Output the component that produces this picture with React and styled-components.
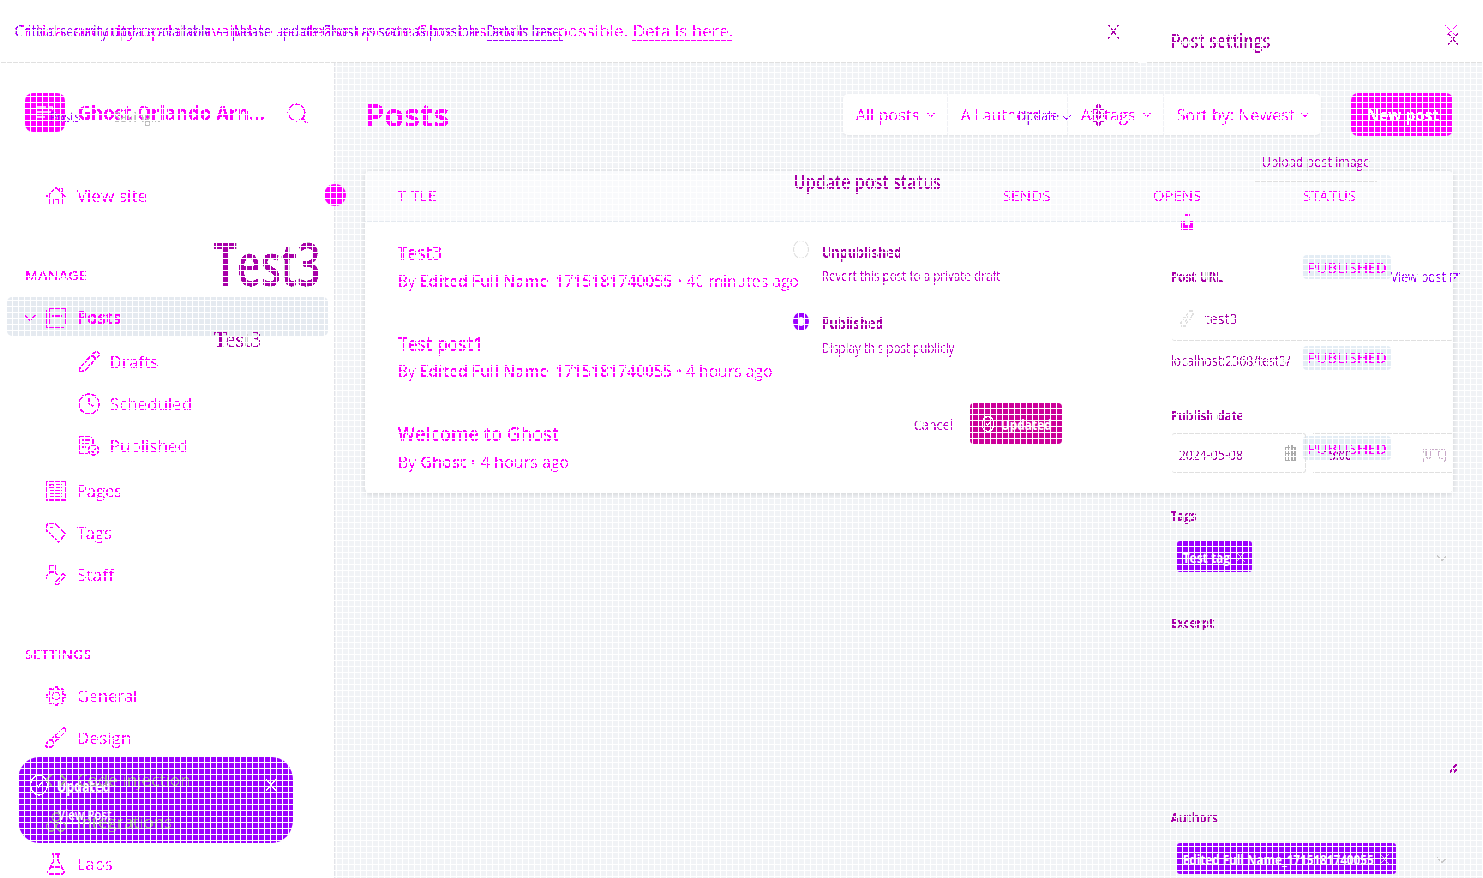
import React, { useLayoutEffect, useRef, useState } from "react";
import styled, { createGlobalStyle, css } from "styled-components";
import {
  Search, Pencil, Clock, Settings, Brush, FlaskConical, Code,
  ChevronDown, ChevronLeft, X, CircleCheck, SquareArrowOutUpRight,
} from "lucide-react";

const C = {
  hot: "#ff00ff", deep: "#a800a8", mid: "#c400cc", violet: "#9c00ff", rose: "#cc0099",
  bg: "#f1f3f6", line: "#e0e0e0", soft: "#e5eaf0", badge: "#e4edf5", gray: "#c8c8c8",
};

const Global = createGlobalStyle`
  * { box-sizing: border-box; }
  html, body { margin: 0; overflow: hidden; }
  body { font-family: "Open Sans", "Noto Sans", sans-serif; background: #fff; }
`;

const Screen = styled.div`
  position: relative;
  width: 1483px;
  height: 878px;
  overflow: hidden;
  background: #fff;
`;

const Defs = styled.svg`
  position: absolute;
  width: 0;
  height: 0;
`;

const GridMesh = styled.div`
  position: absolute;
  inset: 0;
  z-index: 9;
  pointer-events: none;
  background:
    repeating-linear-gradient(to right, #fff 0 1px, transparent 1px 6px),
    repeating-linear-gradient(to bottom, #fff 0 1px, transparent 1px 6px);
`;

const filterOf = (p) => (p.$tone === "plain" ? "none" : p.$tone === "fringe" ? "url(#fringe)" : "url(#crisp)");

const Label = styled.span`
  display: block;
  flex: none;
  width: ${(p) => p.$w}px;
  height: 30px;
  line-height: 30px;
  white-space: nowrap;
  font-size: ${(p) => p.$size}px;
  font-weight: ${(p) => p.$weight};
  color: ${(p) => p.$color};
  filter: ${filterOf};
  ${(p) => p.$serif && css`font-family: "Liberation Serif", serif;`}
  ${(p) => p.$underline && css`text-decoration: underline; text-underline-offset: 3px;`}
  ${(p) => p.$raised && css`position: relative; z-index: 4;`}
`;

const Squeezed = styled.span`
  display: inline-block;
  transform-origin: left center;
  text-decoration: inherit;
  b { font-weight: 600; }
  u { text-decoration-color: currentColor; text-underline-offset: 3px; }
`;

function Text({ w, size = 16, weight = 400, color = C.hot, tone, serif, underline, raised, children }) {
  const ref = useRef(null);
  const [k, setK] = useState(1);
  useLayoutEffect(() => {
    const natural = ref.current.offsetWidth;
    if (natural) setK((w + 1) / natural);
  }, [w]);
  return (
    <Label $w={w} $size={size} $weight={weight} $color={color} $tone={tone} $serif={serif} $underline={underline} $raised={raised}>
      <Squeezed ref={ref} style={{ transform: `translateX(-0.3px) scaleX(${k})` }}>{children}</Squeezed>
    </Label>
  );
}

const Glyph = styled.span`
  display: flex;
  flex: none;
  color: ${(p) => p.$color || C.hot};
  filter: ${filterOf};
  margin: 0 ${(p) => -(p.$bleed || 0)}px;
  ${(p) => p.$raised && css`position: relative; z-index: 4;`}
  svg {
    width: ${(p) => p.$w || 20}px;
    height: ${(p) => p.$h || p.$w || 20}px;
    stroke-width: ${(p) => p.$stroke || 1.4};
  }
`;

/* 20px outline icons of the navigation */
const Outline = ({ d, children }) => (
  <svg viewBox="0 0 20 20" fill="none" stroke="currentColor">
    <path d={d} />
    {children}
  </svg>
);
const HouseIcon = () => <Outline d="M.5 10.500 10 1.500l9.500 9M3.500 9v9.500h4V13h5v5.500h4V9M14 5V2.500h2.500V7" />;
const PostsIcon = () => <Outline d="M3.500.5h16v16h-16zM.5 2.500v17h17M6 4.500h11M6 7.500h10M6 8.500h10" />;
const PagesIcon = () => <Outline d="M.5.5h19v18.500H.5zM4 3.500h4v3H4zM10 3.500h6M10 6.500h6M4 9.500h12M4 12.500h12M4 15.500h12" />;
const TagIcon = () => <Outline d="M.5 7.500v-5l2-2h6l11 10.500-7 8zM4.500 4.500h2.500" />;
const StaffIcon = () => <Outline d="M3.500.5h6v6h-6zM.5 14v-3l3.500-3.500h5l2.500 2.500M9.500 17.500l7.500-9 2.500 2-7.500 9h-2.500z" />;
const PublishedIcon = () => (
  <Outline d="M9 17.500H.5V.5H11l3 3V8M3 4h8M3 7.500h7M3 11h4M12 14l2 2 3-4">
    <circle cx="14.500" cy="14" r="5" />
  </Outline>
);
const IntegrationsIcon = () => (
  <Outline d="">
    <circle cx="10" cy="5" r="4" />
    <circle cx="5" cy="14.500" r="4.500" />
    <circle cx="15" cy="14.500" r="4.500" />
  </Outline>
);
const gearPath = Array.from({ length: 32 }, (_, i) => {
  const r = i % 4 < 2 ? 9.5 : 7.2;
  const a = ((i - 0.5) / 32) * Math.PI * 2;
  return `${i ? "L" : "M"}${(10 + r * Math.cos(a)).toFixed(2)} ${(10 + r * Math.sin(a)).toFixed(2)}`;
}).join("") + "Z";
const GearIcon = () => (
  <Outline d={gearPath}>
    <circle cx="10" cy="10" r="3.700" />
  </Outline>
);
const CalendarIcon = () => (
  <svg viewBox="0 0 12 16" preserveAspectRatio="none" fill="none" stroke="currentColor">
    <path d="M1 2.500h10v13H1zM1 5.500h10M1 8.500h10M1 11.500h10M4.500 0v15M8 0v15" />
  </svg>
);
const LinkIcon = () => (
  <svg viewBox="0 0 14 17" fill="none" stroke="currentColor">
    <path d="M6 6l3-5h3l1 3-3 5H8M8 11l-3 5H2l-1-3 3-5h2M5 12l4-7" />
  </svg>
);
const UnsplashIcon = () => (
  <svg viewBox="0 0 14 18" fill="currentColor">
    <path d="M4 0h6v3H4zM0 8h4v4h6V8h3v9H0z" />
  </svg>
);
const ResizeHandle = () => (
  <svg viewBox="0 0 9 10" fill="none" stroke="currentColor">
    <path d="M1 9 8 1M5 9l3-3" />
  </svg>
);

/* Banner */
const Banner = styled.header`
  display: flex;
  align-items: center;
  justify-content: space-between;
  height: 63px;
  padding: 0 21px 1px 14px;
  border-bottom: 1px solid ${C.line};
`;

const Body = styled.div`
  display: flex;
  height: 815px;
`;

/* Sidebar */
const Sidebar = styled.aside`
  position: relative;
  width: 335px;
  flex: none;
  padding-top: 30px;
  border-right: 1px solid #e3e4e9;
  background: #fff;
`;
const Brand = styled.div`
  display: flex;
  align-items: center;
  height: 40px;
  padding-left: 25px;
`;
const Logo = styled.div`
  display: flex;
  width: 40px;
  height: 39px;
  margin: 0 13px 1px 0;
  padding: 13px 0 0 12px;
  border-radius: 8px;
  background: ${C.hot};
  color: #fff;
`;
const SearchSlot = styled.div`
  margin-left: 21px;
`;
const NavRow = styled.div`
  display: flex;
  align-items: center;
  gap: 11px;
  height: 42px;
  padding-left: ${(p) => (p.$nested ? 79 : 46)}px;
  margin-top: ${(p) => p.$mt || 0}px;
`;
const ActiveRow = styled.div`
  display: flex;
  align-items: center;
  height: 39px;
  margin: 7px 6px 5px 7px;
  padding: 2px 0 0 18px;
  gap: 11px;
  border-radius: 5px;
  background: ${C.soft};
`;
const Caption = styled.div`
  display: flex;
  align-items: center;
  height: 30px;
  margin-top: ${(p) => p.$mt}px;
  padding-left: 25px;
`;
const Collapse = styled.div`
  position: absolute;
  right: -12px;
  top: 121px;
  width: 22px;
  height: 22px;
  border-radius: 50%;
  background: ${C.hot};
`;

/* Main list */
const Main = styled.main`
  flex: 1;
  padding: 30px 30px 0;
  background: ${C.bg};
`;
const Toolbar = styled.div`
  display: flex;
  align-items: center;
  height: 43px;
  margin-bottom: 35px;
`;
const Filters = styled.div`
  display: flex;
  height: 41px;
  margin: 0 30px 0 auto;
  border-radius: 5px;
  background: #fff;
  box-shadow: 0 1px 3px #0001;
`;
const Filter = styled.div`
  display: flex;
  align-items: center;
  width: ${(p) => p.$w}px;
  padding: 0 10px 0 13px;
  justify-content: space-between;
  & + & { border-left: 1px solid #f0f1f5; }
`;
const Primary = styled.div`
  display: flex;
  align-items: center;
  justify-content: center;
  width: 102px;
  height: 43px;
  border-radius: 7px;
  background: ${C.hot};
`;
const Table = styled.section`
  height: 322px;
  border-radius: 5px;
  background: #fff;
  box-shadow: 0 1px 6px #00000024;
`;
const columns = css`
  display: grid;
  grid-template-columns: 605px 150px 150px 1fr;
  padding-left: 33px;
`;
const HeadRow = styled.div`
  ${columns}
  align-items: center;
  height: 51px;
  padding-bottom: 2px;
  border-bottom: 1px solid ${C.soft};
  border-radius: 5px 5px 0 0;
  background: #f9fafc;
`;
const PostRow = styled.div`
  ${columns}
  height: 90.5px;
  padding-top: 16px;
`;
const PostInfo = styled.div`
  grid-column: 1 / 4;
  display: flex;
  flex-direction: column;
`;
const Meta = styled.div`
  margin-top: -2.5px;
`;
const Badge = styled.div`
  display: flex;
  align-items: center;
  width: 88px;
  height: 24px;
  margin-top: 17px;
  padding: 0 0 1px 5px;
  border-radius: 4px;
  background: ${C.badge};
`;

/* Editor layer that floats above the list */
const Layer = styled.div`
  position: absolute;
  inset: 0;
  z-index: 3;
`;
const At = styled.div`
  position: absolute;
  left: ${(p) => p.$x}px;
  top: ${(p) => p.$y - 15}px;
  height: 30px;
  display: flex;
  align-items: center;
`;
const Box = styled.div`
  position: absolute;
  left: ${(p) => p.$x}px;
  top: ${(p) => p.$y}px;
  width: ${(p) => p.$w}px;
  height: ${(p) => p.$h}px;
  display: flex;
  align-items: center;
  gap: 6px;
  padding-left: ${(p) => p.$pad || 0}px;
  border-radius: ${(p) => p.$r || 0};
  background: ${(p) => p.$bg || "transparent"};
`;
const Field = styled(Box)`
  border: solid ${C.line};
  border-width: ${(p) => p.$edges};
`;
const Radio = styled.span`
  width: 16px;
  height: 19px;
  border-radius: 50%;
  border: ${(p) => (p.$on ? `5px solid ${C.violet}` : "1px solid #dcdcdc")};
`;
const Toast = styled(Box)`
  z-index: 2;
  border-radius: 21px / 23px;
`;

const posts = [
  { title: "Test3", w: 43, by: "Edited Full Name_1715181740055", when: "40 minutes ago", mw: 400 },
  { title: "Test post1", w: 84, by: "Edited Full Name_1715181740055", when: "4 hours ago", mw: 374 },
  { title: "Welcome to Ghost", w: 161, by: "Ghost", when: "4 hours ago", mw: 171 },
];

const Nav = ({ icon, label, w, nested, mt, wide, buried }) => (
  <NavRow $nested={nested} $mt={mt}>
    <Glyph $w={wide ? 24 : 20} $bleed={wide ? 2 : 0} $color={buried ? "#999" : C.hot} $raised={buried}>{icon}</Glyph>
    <Text w={w} size={17} color={buried ? "#999" : C.hot} raised={buried}>{label}</Text>
  </NavRow>
);

const Item = ({ x, y, size = 15, ...rest }) => (
  <At $x={x} $y={size === 15 ? y - 1 : y}><Text color={C.deep} tone="fringe" size={size} {...rest} /></At>
);
const Mark = ({ x, y, w, h, color, stroke, children }) => (
  <At $x={x} $y={y}><Glyph $w={w} $h={h} $color={color || C.deep} $stroke={stroke}>{children}</Glyph></At>
);

const Notice = () => (
  <>Critical security update available — please update Ghost as soon as possible. <u>Details here.</u></>
);

export default function App() {
  return (
    <Screen>
      <Global />
      <Defs>
        <filter id="crisp" colorInterpolationFilters="sRGB">
          <feComponentTransfer><feFuncA type="discrete" tableValues="0 0 0 0 1 1 1 1 1" /></feComponentTransfer>
        </filter>
        <filter id="fringe" colorInterpolationFilters="sRGB">
          <feComponentTransfer in="SourceAlpha" result="wide"><feFuncA type="discrete" tableValues="0 0 1 1 1 1 1" /></feComponentTransfer>
          <feFlood floodColor="#d0d0d0" />
          <feComposite in2="wide" operator="in" result="halo" />
          <feComponentTransfer in="SourceGraphic" result="core"><feFuncA type="discrete" tableValues="0 1" /></feComponentTransfer>
          <feMerge><feMergeNode in="halo" /><feMergeNode in="core" /></feMerge>
        </filter>
      </Defs>

      <Banner>
        <Text w={718} size={16}><Notice /></Text>
        <Glyph $w={22}><X /></Glyph>
      </Banner>

      <Body>
        <Sidebar>
          <Brand>
            <Logo>
              <svg width="16" height="12" viewBox="0 0 16 12" fill="none" stroke="currentColor" strokeWidth="1.5">
                <path d="M0 1h9M12 1h4v3M0 6h14M0 11h8" />
              </svg>
            </Logo>
            <Text w={186} size={19} weight={700}>Ghost Orlando Arn...</Text>
            <SearchSlot><Glyph $w={25}><Search /></Glyph></SearchSlot>
          </Brand>
          <Nav icon={<HouseIcon />} label="View site" w={70} mt={42} />
          <Caption $mt={43}><Text w={61} size={13} weight={600}>MANAGE</Text></Caption>
          <ActiveRow>
            <Glyph $w={20} $bleed={5} $stroke={1.8}><ChevronDown /></Glyph>
            <Glyph><PostsIcon /></Glyph>
            <Text w={43} size={17} weight={700}>Posts</Text>
          </ActiveRow>
          <Nav nested wide icon={<Pencil />} label="Drafts" w={48} />
          <Nav nested wide icon={<Clock />} label="Scheduled" w={82} />
          <Nav nested icon={<PublishedIcon />} label="Published" w={77} />
          <Nav icon={<PagesIcon />} label="Pages" w={45} mt={3} />
          <Nav icon={<TagIcon />} label="Tags" w={34} />
          <Nav icon={<StaffIcon />} label="Staff" w={36} />
          <Caption $mt={43}><Text w={66} size={13} weight={600}>SETTINGS</Text></Caption>
          <Nav icon={<GearIcon />} label="General" w={60} mt={6} />
          <Nav wide icon={<Brush />} label="Design" w={54} />
          <Nav wide icon={<Code />} label="Code injection" w={113} buried />
          <Nav icon={<IntegrationsIcon />} label="Integrations" w={95} buried />
          <Nav wide icon={<FlaskConical />} label="Labs" w={35} />
          <Collapse />
        </Sidebar>

        <Main>
          <Toolbar>
            <Text w={84} size={32} weight={700}>Posts</Text>
            <Filters>
              {[["All posts", 63, 104], ["All authors", 78, 120], ["All tags", 54, 96], ["Sort by: Newest", 117, 158]].map(([t, w, box]) => (
                <Filter key={t} $w={box}>
                  <Text w={w}>{t}</Text>
                  <Glyph $w={12} $stroke={2.6}><ChevronDown /></Glyph>
                </Filter>
              ))}
            </Filters>
            <Primary><Text w={71} size={16} weight={700} color="#fff">New post</Text></Primary>
          </Toolbar>
          <Table>
            <HeadRow>
              <Text w={38} size={15}>TITLE</Text>
              <Text w={47} size={15}>SENDS</Text>
              <Text w={48} size={15}>OPENS</Text>
              <Text w={52} size={15}>STATUS</Text>
            </HeadRow>
            {posts.map((p) => (
              <PostRow key={p.title}>
                <PostInfo>
                  <Text w={p.w} size={19} weight={600}>{p.title}</Text>
                  <Meta><Text w={p.mw} size={16}>By <b>{p.by}</b> • {p.when}</Text></Meta>
                </PostInfo>
                <Badge><Text w={78} size={15} weight={500}>PUBLISHED</Text></Badge>
              </PostRow>
            ))}
          </Table>
        </Main>
      </Body>

      <Layer>
        <Item x={15} y={31} w={547} size={16} color={C.violet}><Notice /></Item>
        <Box $x={1138} $y={62} $w={9} $h={1} $bg="#fff" />
        <Mark x={1103} y={31} w={21} h={27}><X preserveAspectRatio="none" /></Mark>
        <Mark x={1443} y={39} w={20} h={24}><X preserveAspectRatio="none" /></Mark>
        <Mark x={33} y={116} w={12} h={16} color={C.gray}><ChevronLeft /></Mark>
        <Item x={50} y={117} w={30} color={C.violet}>Posts</Item>
        <Item x={114} y={117} w={46} color="#bbb">Saving...</Item>

        <At $x={214} $y={263}><Text w={106} size={60} weight={600} color={C.deep} tone="fringe">Test3</Text></At>
        <Item x={214} y={340} w={47} size={23} serif>Test3</Item>

        <Item x={1018} y={116} w={40} color={C.violet}>Update</Item>
        <Mark x={1059} y={117} w={15} h={15} color={C.violet} stroke={2}><ChevronDown /></Mark>
        <Mark x={1090} y={115} w={17} h={24} color={C.mid} stroke={2}><Settings preserveAspectRatio="none" /></Mark>

        <Item x={794} y={182} w={146} size={20} weight={600}>Update post status</Item>
        <At $x={792.5} $y={249}><Radio /></At>
        <Item x={822} y={252} w={79} size={16} weight={700}>Unpublished</Item>
        <Item x={822} y={276} w={178} size={14} color={C.mid}>Revert this post to a private draft</Item>
        <At $x={792.5} $y={321}><Radio $on /></At>
        <Item x={822} y={323} w={61} size={16} weight={700}>Published</Item>
        <Item x={822} y={348} w={132} size={14} color={C.mid}>Display this post publicly</Item>
        <Item x={914} y={425} w={38} color={C.mid}>Cancel</Item>
        <Box $x={970} $y={403} $w={92} $h={41} $r="4px" $bg={C.rose} $pad={11}>
          <Glyph $w={14} $h={18} $color="#fff" $stroke={1.8}><CircleCheck preserveAspectRatio="none" /></Glyph>
          <Text w={50} size={15} weight={700} color="#fff" tone="plain">Updated</Text>
        </Box>

        <Item x={1171} y={41} w={99} size={20} weight={600}>Post settings</Item>
        <Item x={1262} y={162} w={108} color={C.mid}>Upload post image</Item>
        <Box $x={1255} $y={181} $w={122} $h={1} $bg={C.line} />
        <Mark x={1181} y={222} w={13} h={18} color={C.hot}><UnsplashIcon /></Mark>

        <Item x={1171} y={277} w={51} weight={700}>Post URL</Item>
        <Item x={1391} y={277} w={54} color={C.violet}>View post</Item>
        <Mark x={1449} y={278} w={11} h={12} color={C.violet} stroke={3.4}><SquareArrowOutUpRight preserveAspectRatio="none" /></Mark>
        <Field $x={1172} $y={295} $w={281} $h={46} $r="3px" $edges="0 0 1px 0" />
        <Mark x={1180} y={318} w={14} h={17} color={C.line}><LinkIcon /></Mark>
        <Item x={1205} y={319} w={32}>test3</Item>
        <Item x={1171} y={361} w={119}>localhost:2368/test3/</Item>
        <Item x={1171} y={416} w={72} weight={700}>Publish date</Item>
        <Field $x={1172} $y={433} $w={134} $h={40} $r="3px" $edges="1px 1px 1px 0" />
        <Field $x={1313} $y={433} $w={140} $h={40} $edges="1px 0" />
        <Item x={1179} y={455} w={63}>2024-05-08</Item>
        <Mark x={1284} y={453} w={12} h={16} color="#aaa"><CalendarIcon /></Mark>
        <Item x={1323} y={455} w={28}>15:00</Item>
        <Item x={1422} y={454} w={24} size={14} color="#c8a8c8">(UTC)</Item>

        <Item x={1171} y={516} w={25} weight={700}>Tags</Item>
        <Box $x={1177} $y={541} $w={75} $h={31} $r="3px" $bg={C.violet} $pad={6}>
          <Text w={46} size={15} weight={700} color="#fff" tone="plain">Test tag</Text>
          <Glyph $w={15} $h={18} $bleed={2} $color="#ddd"><X preserveAspectRatio="none" /></Glyph>
        </Box>
        <Mark x={1433} y={558} w={18} h={18} color={C.gray} stroke={1.8}><ChevronDown /></Mark>
        <Item x={1171} y={623} w={42} weight={700}>Excerpt</Item>
        <Mark x={1449} y={768} w={9} h={10} stroke={2}><ResizeHandle /></Mark>
        <Item x={1171} y={818} w={46} weight={700}>Authors</Item>
        <Box $x={1177} $y={843} $w={219} $h={31} $r="3px" $bg={C.violet} $pad={6}>
          <Text w={190} size={15} weight={700} color="#fff" tone="plain">Edited Full Name_1715181740055</Text>
          <Glyph $w={15} $h={18} $bleed={2} $color="#ddd"><X preserveAspectRatio="none" /></Glyph>
        </Box>
        <Mark x={1433} y={860} w={18} h={18} color={C.gray} stroke={1.8}><ChevronDown /></Mark>
      </Layer>

      <Toast $x={18} $y={757} $w={275} $h={86} $bg={C.violet} />
      <Layer>
        <Mark x={29} y={785} w={20} h={24} color="#fff"><CircleCheck preserveAspectRatio="none" /></Mark>
        <Item x={57} y={786} w={53} size={16} weight={700} color="#fff" tone="plain">Updated</Item>
        <Mark x={262} y={785} w={18} h={20} color="#fff"><X preserveAspectRatio="none" /></Mark>
        <Item x={58} y={815} w={53} weight={600} color="#fff" tone="plain" underline>View Post</Item>
      </Layer>
      <GridMesh />
    </Screen>
  );
}
